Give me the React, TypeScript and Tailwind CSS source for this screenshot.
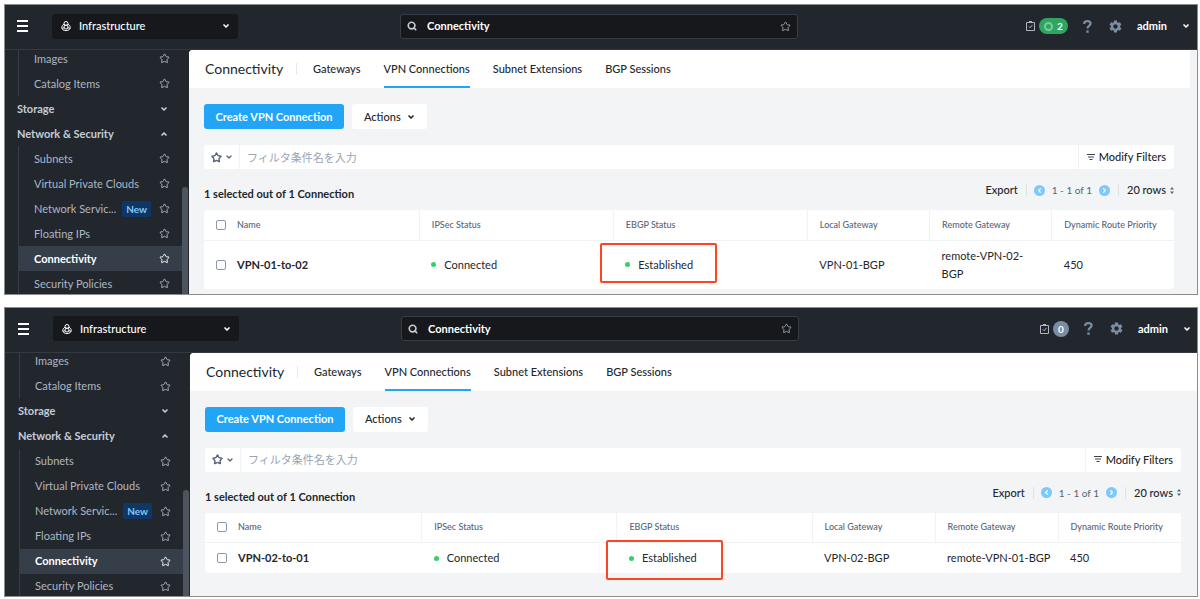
import { ChevronDown, ChevronLeft, ChevronRight, ChevronUp, Search, Star } from "lucide-react";
import { MdSettings } from "react-icons/md";

type Connection = {
  name: string;
  ipsec: string;
  ebgp: string;
  local: string;
  remote: string;
  priority: number;
};

type Site = {
  id: string;
  tasks: number;
  running: boolean;
  headerClass: string;
  bodyClass: string;
  mainClass: string;
  contentClass: string;
  ringClass: string;
  connection: Connection;
};

const sites: Site[] = [
  {
    id: "site-01",
    tasks: 2,
    running: true,
    headerClass: "pr-1",
    bodyClass: "",
    mainClass: "pr-[7px]",
    contentClass: "pb-[5px]",
    ringClass: "-left-[25px] -top-[13px]",
    connection: {
      name: "VPN-01-to-02",
      ipsec: "Connected",
      ebgp: "Established",
      local: "VPN-01-BGP",
      remote: "remote-VPN-02-\nBGP",
      priority: 450,
    },
  },
  {
    id: "site-02",
    tasks: 0,
    running: false,
    headerClass: "pl-px pr-[3px]",
    bodyClass: "pl-px",
    mainClass: "",
    contentClass: "pb-[23px]",
    ringClass: "-left-[23px] -top-[9px]",
    connection: {
      name: "VPN-02-to-01",
      ipsec: "Connected",
      ebgp: "Established",
      local: "VPN-02-BGP",
      remote: "remote-VPN-01-BGP",
      priority: 450,
    },
  },
];

const tabs = ["Gateways", "VPN Connections", "Subnet Extensions", "BGP Sessions"];

const networkItems = [
  { label: "Subnets" },
  { label: "Virtual Private Clouds" },
  { label: "Network Servic...", isNew: true },
  { label: "Floating IPs" },
  { label: "Connectivity", active: true },
  { label: "Security Policies" },
];

export default function App() {
  return (
    <div className="flex flex-col gap-3 bg-white pt-1 pr-0.5 pl-1 font-['Lato','Noto_Sans_CJK_JP',sans-serif] text-[11px] leading-4 text-[#22272e]">
      {sites.map((site) => (
        <Console key={site.id} site={site} />
      ))}
    </div>
  );
}

function Console({ site }: { site: Site }) {
  return (
    <section className="border border-[#8b8c8e]">
      <TopBar site={site} />
      <div className={`flex bg-[#22272e] ${site.bodyClass}`}>
        <Sidebar />
        <main className={`min-w-0 flex-1 rounded-tl-sm bg-[#f2f4f6] ${site.mainClass}`}>
          <TabBar />
          <div className={`px-4 pt-4 pl-[15px] ${site.contentClass}`}>
            <div className="flex gap-2">
              <button className="h-[25px] w-[140px] rounded-[3px] bg-[#22a5f7] font-bold text-white">
                Create VPN Connection
              </button>
              <button className="flex h-[25px] items-center gap-1.5 rounded-[3px] bg-white px-3 font-medium">
                Actions
                <ChevronDown size={8} strokeWidth={5} />
              </button>
            </div>
            <FilterBar />
            <Summary />
            <ConnectionTable site={site} />
          </div>
        </main>
      </div>
    </section>
  );
}

function TopBar({ site }: { site: Site }) {
  return (
    <header
      className={`grid h-[45px] grid-cols-[1fr_398px_1fr] items-center border-b border-[#343a42] bg-[#22272e] pb-0.5 text-white ${site.headerClass}`}
    >
      <div className="flex items-center pl-3">
        <button aria-label="Menu" className="flex w-[11px] flex-col gap-[3px]">
          <span className="h-0.5 bg-white" />
          <span className="h-0.5 bg-white" />
          <span className="h-0.5 bg-white" />
        </button>
        <div className="relative ml-6 flex h-[25px] w-[186px] items-center rounded-[3px] bg-[#16181c]">
          <InfraIcon />
          <select
            aria-label="Application"
            className="h-full w-full appearance-none bg-transparent pl-[27px] font-medium text-white"
          >
            <option>Infrastructure</option>
          </select>
          <ChevronDown size={8} strokeWidth={5} className="pointer-events-none absolute right-2" />
        </div>
      </div>

      <div className="flex h-[25px] items-center rounded-[3px] border border-[#363d47] bg-[#16181c] px-1.5">
        <Search size={10} strokeWidth={4} className="text-[#c3cad4]" />
        <input
          aria-label="Search"
          defaultValue="Connectivity"
          className="ml-2.5 min-w-0 flex-1 bg-transparent font-bold text-white outline-none"
        />
        <Star size={11} strokeWidth={2} className="text-[#9aa5b5]" />
      </div>

      <div className="flex items-center justify-end pr-[3px]">
        <button aria-label="Tasks" className="flex items-center gap-1">
          <TaskIcon />
          {site.running ? (
            <span className="flex h-4 w-[29px] items-center justify-center gap-1 rounded-full bg-[#2ea661] text-[10px] font-bold">
              <span className="size-[9px] rounded-full border-2 border-[#79cb9b]" />
              {site.tasks}
            </span>
          ) : (
            <span className="flex size-4 items-center justify-center rounded-full bg-[#7b8da3] text-[10px] font-bold">
              {site.tasks}
            </span>
          )}
        </button>
        <button aria-label="Help" className="ml-[15px]">
          <svg width="9" height="13" viewBox="0 0 9 13" fill="none" stroke="#7b8da3" strokeWidth="2.2">
            <path d="M1.2 4V3.4C1.2 2 2.6 1.2 4.4 1.2S7.6 2.1 7.6 3.6C7.6 5.6 4.5 5.6 4.5 8.6" />
            <path d="M4.5 10.4v2.4" strokeWidth="2.4" />
          </svg>
        </button>
        <button aria-label="Settings" className="ml-4 text-[#7b8da3]">
          <MdSettings size={15} />
        </button>
        <button className="ml-[14px] flex items-center gap-[15px] font-bold">
          admin
          <ChevronDown size={8} strokeWidth={5} />
        </button>
      </div>
    </header>
  );
}

function Sidebar() {
  return (
    <aside className="relative w-[184px] shrink-0 text-[#aeb6c2]">
      <nav className="h-0 min-h-full overflow-hidden">
        <ul className="-mt-1 ml-[13px] border-l border-[#353d47]">
          <SideItem label="Images" />
          <SideItem label="Catalog Items" />
        </ul>
        <SideGroup label="Storage" />
        <SideGroup label="Network & Security" open />
        <ul className="ml-[13px] border-l border-[#353d47]">
          {networkItems.map((item) => (
            <SideItem key={item.label} {...item} />
          ))}
        </ul>
      </nav>
      {/* scrollbar thumb */}
      <div className="absolute top-[137px] right-px bottom-0 w-1.5 rounded-t-full bg-[#4c545e]" />
    </aside>
  );
}

function SideGroup({ label, open }: { label: string; open?: boolean }) {
  return (
    <button className="flex h-[25px] w-full items-center justify-between pr-[21px] pl-3 font-bold text-[#c5ccd6]">
      {label}
      {open ? <ChevronUp size={8} strokeWidth={5} /> : <ChevronDown size={8} strokeWidth={5} />}
    </button>
  );
}

function SideItem({ label, isNew, active }: { label: string; isNew?: boolean; active?: boolean }) {
  return (
    <li
      className={`mr-[7px] flex h-[25px] items-center pr-3 pl-[15px] ${active ? "bg-[#363f49] font-bold text-white" : ""}`}
    >
      <a href="#" className="flex-1 whitespace-nowrap">
        {label}
      </a>
      {isNew && (
        <span className="mr-2 flex h-4 items-center rounded-xs bg-[#0f3765] px-1 text-[10px] font-bold text-[#7fc8fb]">
          New
        </span>
      )}
      <button aria-label={`Pin ${label}`}>
        <Star size={11} strokeWidth={2} />
      </button>
    </li>
  );
}

function TabBar() {
  return (
    <div className="flex h-[38px] items-center rounded-tl-sm bg-white pl-4">
      <h1 className="w-[92px] border-r border-[#e6e9ed] text-sm leading-3">Connectivity</h1>
      <nav className="ml-4 flex h-full gap-[23px]">
        {tabs.map((tab) => (
          <a
            key={tab}
            href="#"
            className={`flex items-center border-y-2 border-t-transparent font-medium ${tab === "VPN Connections" ? "border-b-[#22a5f7]" : "border-b-transparent"}`}
          >
            {tab}
          </a>
        ))}
      </nav>
    </div>
  );
}

function FilterBar() {
  return (
    <div className="mt-4 flex h-6 items-center rounded-[3px] bg-white">
      <button
        aria-label="Saved filters"
        className="flex h-full w-9 items-center justify-center gap-[3px] border-r border-[#f0f2f4] text-[#56657a]"
      >
        <Star size={11} strokeWidth={3} />
        <ChevronDown size={8} strokeWidth={4} />
      </button>
      <input
        aria-label="Filter"
        placeholder="フィルタ条件名を入力"
        className="h-full min-w-0 flex-1 px-[7px] outline-none placeholder:text-[#99a4b3]"
      />
      <button className="flex h-full items-center gap-1 border-l border-[#f0f2f4] px-2 font-medium">
        <svg width="8" height="7" viewBox="0 0 8 7" fill="none" stroke="#39424e">
          <path d="M0 .5h8M1 3h6M2.5 5.5h3" />
        </svg>
        Modify Filters
      </button>
    </div>
  );
}

function Summary() {
  return (
    <div className="flex h-[41px] items-end justify-between">
      <p className="pb-2 font-bold">1 selected out of 1 Connection</p>
      <div className="flex items-center pb-3">
        <button className="pr-2 font-medium">Export</button>
        <span className="h-3 w-px bg-[#dde1e6]" />
        <button
          aria-label="Previous page"
          className="ml-[7px] flex size-[11px] items-center justify-center rounded-full bg-[#7cc9fb] text-white"
        >
          <ChevronLeft size={7} strokeWidth={4} />
        </button>
        <span className="mx-[7px] text-[10px] text-[#56657a]">1 - 1 of 1</span>
        <button
          aria-label="Next page"
          className="mr-2 flex size-[11px] items-center justify-center rounded-full bg-[#7cc9fb] text-white"
        >
          <ChevronRight size={7} strokeWidth={4} />
        </button>
        <span className="h-3 w-px bg-[#dde1e6]" />
        <select aria-label="Rows per page" className="appearance-none pr-1 pl-2 font-medium">
          <option>20 rows</option>
        </select>
        <svg width="4" height="7" viewBox="0 0 4 7" fill="#56657a">
          <path d="M0 2.5 2 0l2 2.5zM0 4.5 2 7l2-2.5z" />
        </svg>
      </div>
    </div>
  );
}

function ConnectionTable({ site }: { site: Site }) {
  const row = site.connection;

  return (
    <table className="w-full table-fixed rounded-[3px] bg-white text-left">
      <thead className="text-[9px] text-[#56657a]">
        <tr className="h-[30px] *:border-b *:border-[#f0f2f4] *:font-medium">
          <th className="w-6 pl-3 align-middle">
            <Checkbox label="Select all" />
          </th>
          <th className="pl-[9px]">Name</th>
          <th className="w-[20%] border-l pl-3">IPSec Status</th>
          <th className="w-[20%] border-l pl-3">EBGP Status</th>
          <th className="w-[12.6%] border-l pl-3">Local Gateway</th>
          <th className="w-[12.6%] border-l pl-3">Remote Gateway</th>
          <th className="w-[12.6%] border-l pl-3">Dynamic Route Priority</th>
        </tr>
      </thead>
      <tbody className="leading-[18px]">
        <tr className="*:py-1.5 *:whitespace-pre">
          <td className="pl-3 align-middle">
            <Checkbox label={`Select ${row.name}`} />
          </td>
          <td className="pl-[9px] font-bold">{row.name}</td>
          <td className="pl-3">
            <Status label={row.ipsec} />
          </td>
          <td className="pl-3">
            <span className="relative block">
              <Status label={row.ebgp} />
              <span
                className={`absolute h-10 w-[117px] rounded-xs border-2 border-[#ff4520] ${site.ringClass}`}
              />
            </span>
          </td>
          <td className="pl-3">{row.local}</td>
          <td className="pl-3">{row.remote}</td>
          <td className="pl-3">{row.priority}</td>
        </tr>
      </tbody>
    </table>
  );
}

function Checkbox({ label }: { label: string }) {
  return (
    <input
      type="checkbox"
      aria-label={label}
      className="block size-[10px] appearance-none rounded-xs border border-[#8d99aa] bg-white"
    />
  );
}

function Status({ label }: { label: string }) {
  return (
    <span className="flex items-center gap-2">
      <span className="size-[5px] rounded-full bg-[#36d068]" />
      {label}
    </span>
  );
}

function InfraIcon() {
  return (
    <svg
      width="10"
      height="10"
      viewBox="0 0 20 20"
      fill="none"
      stroke="#fff"
      strokeWidth="2"
      className="pointer-events-none absolute left-[9px]"
    >
      <circle cx="10" cy="5" r="4" />
      <path d="M6 6.5C3 8 1.5 10.5 1.5 13c0 3.5 3 6 8.500 6s8.500-2.500 8.500-6c0-2.500-1.500-5-4.500-6.500" />
      <circle cx="10" cy="12" r="4" />
      <path d="M2 14.500l4.500-1M18 14.500l-4.500-1" />
    </svg>
  );
}

function TaskIcon() {
  return (
    <svg width="9" height="10" viewBox="0 0 9 10" fill="none" stroke="#aeb6c2">
      <path d="M.5 1.5h8v8h-8z" />
      <path d="M3 .8h3" strokeWidth="1.6" />
      <path d="m2.8 5.4 1.3 1.4 2.3-2.9" />
    </svg>
  );
}
